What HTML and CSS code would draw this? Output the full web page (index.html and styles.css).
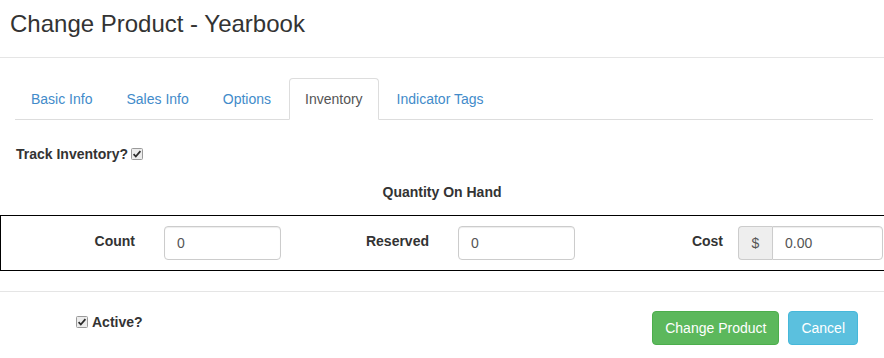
FILE: index.html
```html
<!DOCTYPE html>
<html lang="en">
<head>
    <meta charset="UTF-8">
    <meta name="viewport" content="width=device-width, initial-scale=1.0">
    <title>Change Product - Yearbook</title>
    <link rel="stylesheet" href="styles.css">
</head>
<body>

    <div class="modal-header">
        <h3 class="modal-title">Change Product - Yearbook</h3>
    </div>

    <div class="modal-body">
        <div class="tab-area">
            <ul class="nav-tabs">
                <li><a href="#">Basic Info</a></li>
                <li><a href="#">Sales Info</a></li>
                <li><a href="#">Options</a></li>
                <li class="active"><a href="#">Inventory</a></li>
                <li><a href="#">Indicator Tags</a></li>
            </ul>

            <div class="track-row">
                <span class="bold-label">Track Inventory?</span>
                <span class="checkbox">
                    <svg width="12" height="12" viewBox="0 0 12 12">
                        <rect x="0.5" y="0.5" width="11" height="11" rx="1" fill="#ececec" stroke="#9a9a9a"/>
                        <path d="M2.6 6.2 L4.8 8.5 L9.4 3.2" fill="none" stroke="#2b2b2b" stroke-width="1.8"/>
                    </svg>
                </span>
            </div>

            <div class="qoh-title">Quantity On Hand</div>
        </div>

        <div class="qty-box">
            <div class="qty-col">
                <label class="qty-label" for="count">Count</label>
                <div class="qty-field">
                    <input type="text" id="count" class="form-control" value="0">
                </div>
            </div>
            <div class="qty-col">
                <label class="qty-label" for="reserved">Reserved</label>
                <div class="qty-field">
                    <input type="text" id="reserved" class="form-control" value="0">
                </div>
            </div>
            <div class="qty-col">
                <label class="qty-label" for="cost">Cost</label>
                <div class="qty-field qty-field-group">
                    <div class="input-group">
                        <span class="addon">$</span>
                        <input type="text" id="cost" class="form-control" value="0.00">
                    </div>
                </div>
            </div>
        </div>
    </div>

    <div class="modal-footer">
        <div class="active-check">
            <span class="checkbox">
                <svg width="12" height="12" viewBox="0 0 12 12">
                    <rect x="0.5" y="0.5" width="11" height="11" rx="1" fill="#ececec" stroke="#9a9a9a"/>
                    <path d="M2.6 6.2 L4.8 8.5 L9.4 3.2" fill="none" stroke="#2b2b2b" stroke-width="1.8"/>
                </svg>
            </span>
            <span class="bold-label">Active?</span>
        </div>
        <div class="buttons">
            <button class="btn btn-success">Change Product</button>
            <button class="btn btn-info">Cancel</button>
        </div>
    </div>

</body>
</html>
```

FILE: styles.css
```css
body {
    font-family: "Liberation Sans", Arial, sans-serif;
    font-size: 14px;
    line-height: 20px;
    color: #333;
    margin: 0;
    background-color: #fff;
    overflow: hidden;
}

.modal-header {
    padding: 11px 10px 20px;
    border-bottom: 1px solid #e5e5e5;
}
.modal-title {
    margin: 0;
    font-size: 24px;
    font-weight: normal;
    line-height: 26px;
}

.modal-body {
    padding-top: 20px;
}
.tab-area {
    padding: 0 11px 0 15px;
}

.nav-tabs {
    display: flex;
    list-style: none;
    margin: 0;
    padding: 0;
    border-bottom: 1px solid #ddd;
}
.nav-tabs li {
    margin-right: 2px;
    margin-bottom: -1px;
}
.nav-tabs a {
    display: block;
    padding: 10px 15px;
    border: 1px solid transparent;
    border-radius: 4px 4px 0 0;
    color: #428bca;
    text-decoration: none;
}
.nav-tabs .active a {
    color: #555;
    background-color: #fff;
    border-color: #ddd;
    border-bottom-color: transparent;
}

.bold-label {
    font-weight: bold;
}
.checkbox {
    display: inline-flex;
    vertical-align: middle;
}
.checkbox svg {
    display: block;
}

.track-row {
    margin-top: 24px;
    padding-left: 1px;
    display: flex;
    align-items: center;
    gap: 3px;
}

.qoh-title {
    margin-top: 18px;
    font-weight: bold;
    text-align: center;
    margin-right: -11px;
    margin-left: -15px;
}

.qty-box {
    margin-top: 13px;
    margin-right: -4px;
    border: 1px solid #000;
    padding: 10px 0;
    display: grid;
    grid-template-columns: 294px 294px 1fr;
}
.qty-col {
    display: grid;
    grid-template-columns: 149px 1fr;
}
.qty-label {
    font-weight: bold;
    text-align: right;
    padding-right: 15px;
    padding-top: 5px;
}
.qty-field {
    padding-left: 14px;
}
.qty-field-group {
    padding-left: 0;
}

.form-control {
    box-sizing: border-box;
    width: 117px;
    height: 34px;
    padding: 6px 12px;
    font-family: inherit;
    font-size: 14px;
    color: #555;
    border: 1px solid #ccc;
    border-radius: 4px;
    box-shadow: inset 0 1px 1px rgba(0, 0, 0, 0.075);
}
.input-group {
    display: flex;
    width: 145px;
}
.addon {
    box-sizing: border-box;
    width: 34px;
    height: 34px;
    padding: 6px 0;
    text-align: center;
    color: #555;
    background-color: #eee;
    border: 1px solid #ccc;
    border-right: none;
    border-radius: 4px 0 0 4px;
}
.input-group .form-control {
    width: 111px;
    border-radius: 0 4px 4px 0;
}

.modal-footer {
    margin-top: 20px;
    border-top: 1px solid #e5e5e5;
    padding: 19px 26px 13px 76px;
    display: flex;
    justify-content: space-between;
    align-items: flex-start;
}
.active-check {
    display: flex;
    align-items: center;
    gap: 4px;
    margin-top: 1px;
}

.buttons {
    display: flex;
    gap: 9px;
}
.btn {
    padding: 6px 12px;
    font-family: inherit;
    font-size: 14px;
    line-height: 20px;
    color: #fff;
    border: 1px solid transparent;
    border-radius: 4px;
    cursor: pointer;
}
.btn-success {
    background-color: #5cb85c;
    border-color: #4cae4c;
}
.btn-success:hover {
    background-color: #449d44;
}
.btn-info {
    background-color: #5bc0de;
    border-color: #46b8da;
}
.btn-info:hover {
    background-color: #31b0d5;
}
```
